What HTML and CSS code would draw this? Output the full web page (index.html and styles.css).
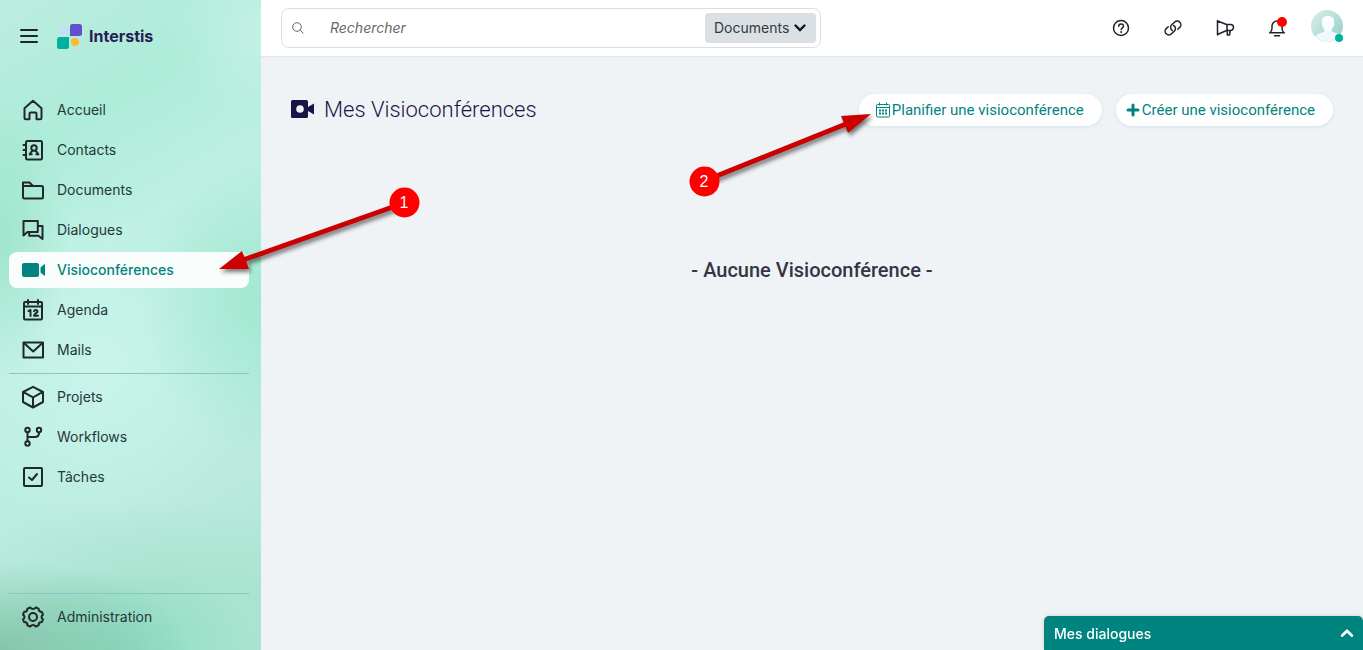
FILE: index.html
```html
<!DOCTYPE html>
<html lang="fr">
<head>
<meta charset="utf-8">
<meta name="viewport" content="width=device-width, initial-scale=1">
<title>Interstis - Visioconférences</title>
<link rel="stylesheet" href="styles.css">
</head>
<body>
<div class="app">
  <aside class="sidebar">
    <div class="brand">
      <button class="icon-button" type="button" aria-label="Menu">
        <svg width="20" height="16" viewBox="0 0 20 16" fill="none" stroke="#20242a" stroke-width="2" stroke-linecap="round"><path d="M2 2h16M2 8h16M2 14h16"/></svg>
      </button>
      <a class="logo" href="#">
        <svg width="26" height="26" viewBox="0 0 26 26" aria-hidden="true">
          <circle cx="7" cy="8" r="4" fill="#c8dcfb"/>
          <path d="M15.500 1h7a2.500 2.500 0 0 1 2.500 2.500v7a2.500 2.500 0 0 1-2.500 2.500H13V3.500A2.500 2.500 0 0 1 15.500 1z" fill="#6450cc"/>
          <path d="M3 14h9v9.500a2.500 2.500 0 0 1-2.500 2.500H2.500A2.500 2.500 0 0 1 0 23.500V17a3 3 0 0 1 3-3z" fill="#00b0a0"/>
          <circle cx="18" cy="19" r="4" fill="#fdb833"/>
        </svg>
        <span class="logo-name">Interstis</span>
      </a>
    </div>
    <nav class="nav" aria-label="Navigation principale">
      <a class="nav-item" href="#"><svg class="nav-icon" viewBox="0 0 24 24"><path d="M3.500 10.200 12 2.800l8.500 7.400V20a1.300 1.300 0 0 1-1.300 1.300H15.500v-5.500a1.300 1.300 0 0 0-1.300-1.300H9.800a1.300 1.300 0 0 0-1.300 1.300v5.500H4.800A1.300 1.300 0 0 1 3.500 20z"/></svg>Accueil</a>
      <a class="nav-item" href="#"><svg class="nav-icon" viewBox="0 0 24 24"><rect x="5" y="3" width="16" height="18.500" rx="1.500"/><path d="M2.500 7H5M2.500 12H5M2.500 17H5"/><circle cx="13" cy="10" r="2.700"/><path d="M8.700 16.500c.5-2 1.600-3 2.800-3.400M17.300 16.500c-.5-2-1.600-3-2.800-3.400M8.700 16.300h2M15.300 16.300h2"/></svg>Contacts</a>
      <a class="nav-item" href="#"><svg class="nav-icon" viewBox="0 0 24 24"><path d="M3 8h17.500A1.500 1.500 0 0 1 22 9.500V19a1.500 1.500 0 0 1-1.500 1.500h-17A1.500 1.500 0 0 1 2 19V4.500h6.500L12 8"/></svg>Documents</a>
      <a class="nav-item" href="#"><svg class="nav-icon" viewBox="0 0 24 24"><path d="M2.500 3h14.300v11H6.500L2.500 17.500zM16.800 8H21.500v13l-4-3.200H8.200V14"/></svg>Dialogues</a>
      <a class="nav-item nav-item-active" href="#" aria-current="page"><svg class="nav-icon nav-icon-solid" viewBox="0 0 24 24"><rect x="1" y="5" width="17" height="14" rx="2"/><path d="M19.500 9.500 23 6.500q1-.5 1 .5v10q0 1-1 .5l-3.500-3z"/></svg>Visioconférences</a>
      <a class="nav-item" href="#"><svg class="nav-icon" viewBox="0 0 24 24"><rect x="3" y="4" width="18" height="17.500" rx="1"/><path d="M3 8.500h18M7 2v4M17 2v4M7.500 13l2-1v6M13 13.300c.3-1.800 3.700-1.700 3.500.3-.1 1.300-3.500 2.500-3.500 4.200h4" /></svg>Agenda</a>
      <a class="nav-item" href="#"><svg class="nav-icon" viewBox="0 0 24 24"><rect x="2.500" y="4.500" width="19.500" height="15"/><path d="m3 5 9.200 8.500L21.500 5"/></svg>Mails</a>
      <hr class="rule">
      <a class="nav-item" href="#"><svg class="nav-icon" viewBox="0 0 24 24"><path d="M12 1.800 22 7v10l-10 5.500L2 17V7zM2.500 7.200 12 12.300l9.500-5.100M12 12.300v10"/></svg>Projets</a>
      <a class="nav-item" href="#"><svg class="nav-icon" viewBox="0 0 24 24"><circle cx="6.500" cy="5" r="2.200"/><circle cx="18" cy="5" r="2.200"/><circle cx="6.500" cy="18.500" r="2.200"/><path d="M6.500 7.500V16M7 12h7c3 0 4-2 4-4.500"/></svg>Workflows</a>
      <a class="nav-item" href="#"><svg class="nav-icon" viewBox="0 0 24 24"><rect x="3" y="3" width="18" height="18" rx="1"/><path d="m8 12.500 3 2.500 5-6"/></svg>Tâches</a>
    </nav>
    <div class="nav nav-bottom">
      <hr class="rule">
      <a class="nav-item" href="#"><svg class="nav-icon" viewBox="0 0 24 24"><path d="M9.200 2.500Q12 5.500 14.800 2.500L17.500 3.600Q17.500 7 21 7L22 9.600Q19 12 22 14.500L21 17Q17.500 17 17.500 20.400L14.800 21.500Q12 18.500 9.200 21.500L6.500 20.400Q6.500 17 3 17L2 14.500Q5 12 2 9.600L3 7Q6.500 7 6.500 3.600z"/><circle cx="12" cy="12" r="4"/></svg>Administration</a>
    </div>
  </aside>

  <div class="content">
    <header class="topbar">
      <form class="search" role="search">
        <svg width="12" height="12" viewBox="0 0 12 12" fill="none" stroke="#666" aria-hidden="true"><circle cx="5" cy="5" r="4.300"/><path d="m8.200 8.200 3.300 3.300"/></svg>
        <input class="search-input" type="search" placeholder="Rechercher" aria-label="Rechercher">
        <select class="search-scope" aria-label="Type de recherche"><option>Documents</option></select>
        <svg class="scope-arrow" width="12" height="8" viewBox="0 0 12 8" fill="none" stroke="#111820" stroke-width="2.400" stroke-linecap="round" aria-hidden="true"><path d="m1.500 1.500 4.500 4.500 4.500-4.500"/></svg>
      </form>
      <div class="tools">
        <button class="icon-button" type="button" aria-label="Aide"><svg class="tool-icon" viewBox="0 0 20 20"><circle cx="10" cy="10" r="7.500"/><path d="M7.700 8.300c0-3.200 4.800-3 4.800-.2 0 1.700-2.300 1.700-2.300 3.500M10.100 13.600v1"/></svg></button>
        <button class="icon-button" type="button" aria-label="Liens"><svg class="tool-icon" viewBox="0 0 20 20"><path d="M9.300 12.500a3.600 3.600 0 0 1-.8-5.500l3-2.800a3.700 3.700 0 0 1 5.300 0 3.700 3.700 0 0 1 0 5.200l-2 1.900M10.700 7.500a3.600 3.600 0 0 1 .8 5.500l-3 2.800a3.700 3.700 0 0 1-5.300 0 3.700 3.700 0 0 1 0-5.200l2-1.900"/></svg></button>
        <button class="icon-button" type="button" aria-label="Annonces"><svg class="tool-icon" viewBox="0 0 20 20"><path d="M2.500 2.500v14.500M2.500 3l9 3.500h4a3 3 0 0 1 0 6h-4l-9 4M12 6.500v6M12.300 12.500v4.500h2.200l.8-4.500"/></svg></button>
        <button class="icon-button bell" type="button" aria-label="Notifications"><svg class="tool-icon" viewBox="0 0 20 20"><path d="M2.700 14.800c1.500-1 2.300-2.500 2.300-4.500V8a5 5 0 0 1 10 0v2.300c0 2 .8 3.500 2.300 4.500zM7.500 17.700h5"/></svg><span class="dot dot-alert"></span></button>
        <button class="icon-button avatar" type="button" aria-label="Profil">
          <svg width="32" height="32" viewBox="0 0 32 32"><defs><linearGradient id="disc" x1="0" y1="0" x2="1" y2="1"><stop stop-color="#dcefed"/><stop offset="1" stop-color="#91cec4"/></linearGradient><linearGradient id="person" x1="0" y1="0" x2="0" y2="1"><stop stop-color="#fff"/><stop offset="1" stop-color="#eff5fe"/></linearGradient><clipPath id="round"><circle cx="16" cy="16" r="16"/></clipPath></defs><g clip-path="url(#round)"><path fill="url(#disc)" d="M0 0h32v32H0z"/><path fill="url(#person)" d="M11 10.500C11 7.500 13.500 6 17 6s6 1.500 6 4.500v2.800c0 2.500-.8 4.300-2.300 5.700v2.500l7 2.500c2 .8 4 3 4 8H2c1-5 3-7 5.500-8l5.800-2.500V19c-1.500-1.400-2.300-3.200-2.300-5.700z"/></g></svg>
          <span class="dot dot-online"></span>
        </button>
      </div>
    </header>

    <main class="page">
      <div class="page-head">
        <h1 class="page-title"><svg width="23" height="20" viewBox="0 0 23 20" fill="#1c1447" fill-rule="evenodd" aria-hidden="true"><path d="M1.500 0h14A1.500 1.500 0 0 1 17 1.500v15a1.500 1.500 0 0 1-1.500 1.500h-14A1.500 1.500 0 0 1 0 16.500v-15A1.500 1.500 0 0 1 1.500 0zM9 5.200a3.800 3.800 0 1 0 0 7.600 3.800 3.800 0 0 0 0-7.600zM17 7 23 3.500v11L17 11z"/></svg>Mes Visioconférences</h1>
        <div class="actions">
          <button class="pill pill-plan" type="button"><svg width="14" height="16" viewBox="0 0 14 16" fill="none" stroke="#008480" aria-hidden="true"><rect x=".5" y="2.500" width="13" height="12.500" rx="1"/><path d="M.5 5.500h13M3.500.5v3M10.500.5v3"/><path stroke-width="2" stroke-dasharray="2 1" d="M3 8.500h8M3 11.500h8"/></svg>Planifier une visioconférence</button>
          <button class="pill pill-create" type="button"><svg width="14" height="14" viewBox="0 0 14 14" stroke="#008480" stroke-width="3" stroke-linecap="round" aria-hidden="true"><path d="M7 2v10M2 7h10"/></svg>Créer une visioconférence</button>
        </div>
      </div>
      <p class="empty">- Aucune Visioconférence -</p>
    </main>
  </div>
</div>

<button class="chat" type="button">Mes dialogues<svg width="14" height="10" viewBox="0 0 14 10" fill="none" stroke="#fff" stroke-width="2.800" stroke-linecap="round" aria-hidden="true"><path d="M2.200 7.500 7 3l4.800 4.500"/></svg></button>

<svg class="callouts" width="900" height="300" viewBox="0 0 900 300" role="img" aria-label="Étapes 1 et 2">
  <g class="arrow"><path d="M404 203 243 260" stroke-width="5"/><path class="head" d="M219 269 242 251 249 269z"/></g>
  <g class="arrow"><path d="M704 181 846 124" stroke-width="5"/><path class="head" d="M871 114 841 116 848 133z"/></g>
  <circle cx="404.500" cy="202.500" r="15" fill="#f00"/>
  <circle cx="704.500" cy="181.500" r="15" fill="#f00"/>
  <text class="step" x="404" y="208">1</text>
  <text class="step" x="704" y="187">2</text>
</svg>
</body>
</html>
```
FILE: styles.css
```css
* { box-sizing: border-box; }

body {
  margin: 0;
  font-family: Roboto, "Liberation Sans", sans-serif;
  background: #eff3f6;
}

button, input, select { font: inherit; }

.app { display: flex; min-height: 100vh; }

.sidebar {
  display: flex;
  flex-direction: column;
  flex: 0 0 261px;
  padding: 23px 12px 15px 9px;
  font-family: Inter, "Liberation Sans", sans-serif;
  background:
    radial-gradient(ellipse 190px 90px at 0 100%, #84c5ab 0%, #84c5ab00 100%),
    radial-gradient(ellipse 150px 80px at 110px 650px, #8bdbc1 0%, #8bdbc100 100%),
    radial-gradient(ellipse 200px 90px at 160px 590px, #a0dfcaaa 0%, #a0dfca00 100%),
    radial-gradient(ellipse 120px 150px at 261px 300px, #a2e8d1 0%, #a2e8d100 100%),
    radial-gradient(ellipse 70px 140px at 0 240px, #a0e5cd 0%, #a0e5cd00 100%),
    radial-gradient(ellipse 160px 170px at 100px 370px, #c9f4ea 0%, #c9f4ea00 100%),
    radial-gradient(ellipse 90px 90px at 261px 30px, #c3f1e6 0%, #c3f1e600 100%),
    linear-gradient(150deg, #bceddf 0%, #adecd8 20%, #bef0e3 38%, #bbeee1 60%, #b9eadc 78%, #a9e5d1 100%);
}

.brand { display: flex; align-items: center; gap: 18px; padding-left: 10px; }

.icon-button {
  display: flex;
  padding: 0;
  border: 0;
  background: none;
  cursor: pointer;
}

.logo { display: flex; align-items: center; gap: 6px; color: #281c55; text-decoration: none; }
.logo-name { font-size: 16px; font-weight: 700; line-height: 24px; }

.nav { display: flex; flex-direction: column; gap: 4px; margin-top: 43px; }
.nav-bottom { margin-top: auto; }

.nav-item {
  display: flex;
  align-items: center;
  gap: 12px;
  height: 36px;
  padding: 0 12px;
  border-radius: 8px;
  font-size: 14px;
  line-height: 18px;
  color: #24383a;
  text-decoration: none;
}
.nav-item-active { background: #f9fdfc; color: #008480; font-weight: 500; }

.nav-icon {
  width: 24px;
  height: 24px;
  fill: none;
  stroke: #20282b;
  stroke-width: 2;
  stroke-linejoin: round;
  stroke-linecap: round;
}
.nav-icon-solid { fill: #008480; stroke: none; }

.rule { width: 100%; height: 1px; margin: 1px 0; border: 0; background: #8cc6c4; }

.content { flex: 1; min-width: 0; }

.topbar {
  display: flex;
  align-items: center;
  justify-content: space-between;
  height: 57px;
  padding: 0 20px;
  background: #fff;
  border-bottom: 1px solid #e2e6e9;
}

.search {
  position: relative;
  display: flex;
  align-items: center;
  flex: 0 1 540px;
  height: 40px;
  padding: 0 4px 0 10px;
  border: 1px solid #dbdfe5;
  border-radius: 8px;
}
.search-input {
  flex: 1;
  min-width: 0;
  padding: 0 0 0 26px;
  border: 0;
  outline: 0;
  font-family: Inter, "Liberation Sans", sans-serif;
  font-size: 14px;
  font-style: italic;
  line-height: 18px;
  background: none;
}
.search-input::placeholder { color: #6b6667; opacity: 1; }
.search-scope {
  appearance: none;
  width: 111px;
  height: 30px;
  padding: 0 9px 1px;
  border: 0;
  border-radius: 4px;
  background: #dbe0e4;
  color: #343a40;
  font-family: Inter, "Liberation Sans", sans-serif;
  font-size: 14px;
}
.scope-arrow { position: absolute; right: 14px; pointer-events: none; }

.tools { display: flex; align-items: center; gap: 32px; }
.tool-icon {
  width: 20px;
  height: 20px;
  fill: none;
  stroke: #20232a;
  stroke-width: 1.5;
  stroke-linecap: round;
  stroke-linejoin: round;
}
.bell, .avatar { position: relative; }
.avatar { margin: -4px 0 0 -8px; }
.dot { position: absolute; border-radius: 50%; }
.dot-alert { top: -1px; right: 0; width: 10px; height: 10px; background: #f00; }
.dot-online { right: 0; bottom: 0; width: 8px; height: 8px; background: #00b0a0; }

.page { padding: 37px 30px; }
.page-head { display: flex; align-items: center; justify-content: space-between; }
.page-title {
  display: flex;
  align-items: center;
  gap: 10px;
  margin: 0;
  font-size: 22px;
  font-weight: 300;
  line-height: 32px;
  color: #1c1447;
}

.actions { display: flex; gap: 14px; }
.pill {
  display: flex;
  align-items: center;
  gap: 2px;
  height: 32px;
  border: 0;
  border-radius: 16px;
  background: #fff;
  box-shadow: 0 1px 4px #0084801f;
  color: #008480;
  font-size: 15px;
}
.pill-plan { padding: 0 18px 0 17px; }
.pill-create { padding: 0 18px 0 10px; }

.empty {
  margin: 132px 0 0;
  font-size: 20px;
  font-weight: 500;
  line-height: 24px;
  text-align: center;
  color: #373545;
}

.chat {
  position: fixed;
  right: 0;
  bottom: 0;
  display: flex;
  align-items: center;
  justify-content: space-between;
  width: 319px;
  height: 34px;
  padding: 0 9px 0 10px;
  border: 0;
  border-radius: 5px 5px 0 0;
  background: #008480;
  box-shadow: 0 0 4px #0002;
  color: #fff;
  font-family: Inter, "Liberation Sans", sans-serif;
  font-size: 14px;
  font-weight: 500;
}

.callouts { position: absolute; top: 0; left: 0; pointer-events: none; }
.arrow { stroke: #c00; filter: drop-shadow(2px 3px 2px #0008); }
.head { fill: #c00; stroke: none; }
.step {
  fill: #fff;
  font-family: "Liberation Sans", Arial, sans-serif;
  font-size: 16px;
  text-anchor: middle;
}
```
